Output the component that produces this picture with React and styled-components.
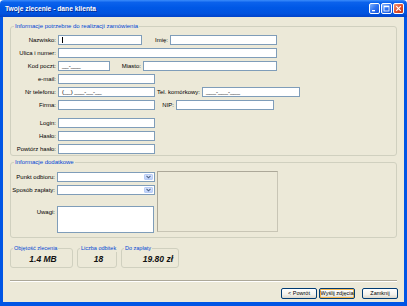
import React from "react";
import styled, { createGlobalStyle } from "styled-components";

const GlobalStyle = createGlobalStyle`
  html, body {
    margin: 0;
    padding: 0;
  }
  body {
    width: 407px;
    height: 306px;
    overflow: hidden;
    font-family: "Liberation Sans", Arial, sans-serif;
  }
`;

const Window = styled.div`
  width: 407px;
  height: 306px;
  display: flex;
  flex-direction: column;
  box-sizing: border-box;
`;

const TitleBar = styled.div`
  height: 17px;
  flex: none;
  display: flex;
  align-items: center;
  padding: 0 3px 0 5px;
  border-radius: 4px 4px 0 0;
  background: linear-gradient(
    #3b8cfb 0%,
    #0b62ec 14%,
    #0058e6 45%,
    #0153de 80%,
    #0143c9 100%
  );
`;

const Title = styled.div`
  flex: 1;
  color: #fff;
  font-size: 6.7px;
  font-weight: bold;
  text-shadow: 1px 1px 0 #0a2a8c;
`;

const TitleButtons = styled.div`
  display: flex;
  gap: 1px;
`;

const TitleButton = styled.div`
  width: 11px;
  height: 11px;
  box-sizing: border-box;
  border: 1px solid #fff;
  border-radius: 2px;
  display: flex;
  align-items: center;
  justify-content: center;
  background: ${(p) =>
    p.$close
      ? "linear-gradient(135deg, #f09a7c, #e1512f 50%, #c23a1a)"
      : "linear-gradient(135deg, #7fb1ff, #2f72f0 50%, #1656dd)"};
`;

const Body = styled.div`
  flex: 1;
  display: flex;
  flex-direction: column;
  background: #ece9d8;
  border: 0 solid #0055e5;
  border-width: 0 3px 4px 3px;
  padding: 6px 7px 0 7px;
  font-size: 6px;
  color: #000;
`;

const Group = styled.fieldset`
  margin: ${(p) => p.$m || "0"};
  padding: ${(p) => p.$pad};
  border: 1px solid #d0d0bf;
  border-radius: 3px;
  min-width: 0;
  width: ${(p) => (p.$w ? `${p.$w}px` : "auto")};
  box-sizing: border-box;
`;

const Legend = styled.legend`
  padding: 0 1px;
  margin-left: ${(p) => p.$ml || 3}px;
  color: #0046d5;
  font-size: ${(p) => p.$fs || 6}px;
  line-height: 7px;
  white-space: nowrap;
`;

const Rows = styled.div`
  display: flex;
  flex-direction: column;
  gap: 3px;
`;

const Row = styled.div`
  display: flex;
  align-items: ${(p) => (p.$top ? "flex-start" : "center")};
  margin-top: ${(p) => p.$mt || 0}px;
`;

const Label = styled.div`
  flex: none;
  width: ${(p) => p.$w}px;
  box-sizing: border-box;
  padding-right: 2px;
  padding-top: ${(p) => (p.$top ? 2 : 0)}px;
  text-align: right;
  white-space: nowrap;
  font-size: 6px;
  line-height: 8px;
`;

const Field = styled.div`
  flex: none;
  width: ${(p) => p.$w}px;
  height: ${(p) => p.$h || 10}px;
  box-sizing: border-box;
  border: 1px solid #7f9db9;
  background: #fff;
  font-size: 6px;
  line-height: 8px;
  padding: 0 3px;
  white-space: nowrap;
  overflow: hidden;
`;

const Caret = styled.span`
  display: inline-block;
  width: 1px;
  height: 6px;
  margin-top: 1px;
  background: #000;
  vertical-align: top;
`;

const Combo = styled.div`
  flex: none;
  width: ${(p) => p.$w}px;
  height: 10px;
  box-sizing: border-box;
  border: 1px solid #7f9db9;
  background: #fff;
  display: flex;
  justify-content: flex-end;
  padding: 1px;
`;

const ComboButton = styled.div`
  width: 9px;
  height: 100%;
  box-sizing: border-box;
  border: 1px solid #b9cdf6;
  border-radius: 1px;
  background: linear-gradient(#dbe6fd, #bcd0fa);
  display: flex;
  align-items: center;
  justify-content: center;
`;

const Split = styled.div`
  display: flex;
  align-items: flex-start;
`;

const Panel = styled.div`
  width: 121px;
  height: 61px;
  margin: -1px 0 0 2px;
  box-sizing: border-box;
  border: 1px solid #aca899;
  border-right-color: #c8c5b5;
  border-bottom-color: #c8c5b5;
`;

const InfoRow = styled.div`
  display: flex;
  gap: 4px;
  margin-top: 7px;
`;

const Value = styled.div`
  height: 15px;
  font-size: 8.5px;
  font-weight: bold;
  font-style: italic;
  line-height: 15px;
  color: #111;
  text-align: ${(p) => p.$align || "center"};
  padding: 0 ${(p) => (p.$align === "right" ? 5 : 0)}px 0 ${(p) => (p.$align === "right" ? 0 : 3)}px;
`;

const Separator = styled.div`
  margin-top: 12px;
  border-top: 1px solid #aca899;
  border-bottom: 1px solid #fff;
`;

const ButtonRow = styled.div`
  display: flex;
  justify-content: flex-end;
  gap: 2px;
  margin-top: 6px;
  margin-right: -1px;
`;

const Button = styled.div`
  width: 36px;
  height: 11px;
  box-sizing: border-box;
  margin-left: ${(p) => p.$ml || 0}px;
  border: 1px solid #003c74;
  border-radius: 2px;
  background: linear-gradient(#ffffff, #f3f2ec 60%, #dcd8cc);
  box-shadow: ${(p) => (p.$default ? "inset 0 0 0 1px #f7b851" : "none")};
  font-size: 5.5px;
  line-height: 9px;
  text-align: center;
  white-space: nowrap;
`;

const Chevron = () => (
  <svg width="5" height="4" viewBox="0 0 5 4">
    <path d="M0.5 0.8 L2.5 2.8 L4.5 0.8" fill="none" stroke="#4d6185" strokeWidth="1.1" />
  </svg>
);

export default function App() {
  return (
    <Window>
      <GlobalStyle />
      <TitleBar>
        <Title>Twoje zlecenie - dane klienta</Title>
        <TitleButtons>
          <TitleButton>
            <svg width="7" height="7" viewBox="0 0 7 7">
              <rect x="1" y="5" width="3" height="1.3" fill="#fff" />
            </svg>
          </TitleButton>
          <TitleButton>
            <svg width="7" height="7" viewBox="0 0 7 7">
              <rect x="1" y="1" width="5" height="5" fill="none" stroke="#fff" strokeWidth="0.8" />
              <rect x="1" y="1" width="5" height="1.2" fill="#fff" />
            </svg>
          </TitleButton>
          <TitleButton $close>
            <svg width="7" height="7" viewBox="0 0 7 7">
              <path d="M1.2 1.2 L5.8 5.8 M5.8 1.2 L1.2 5.8" stroke="#fff" strokeWidth="1.2" />
            </svg>
          </TitleButton>
        </TitleButtons>
      </TitleBar>
      <Body>
        <Group $pad="5px 0 1px 0">
          <Legend>Informacje potrzebne do realizacji zamówienia</Legend>
          <Rows>
            <Row>
              <Label $w={47}>Nazwisko:</Label>
              <Field $w={84}>
                <Caret />
              </Field>
              <Label $w={28}>Imię:</Label>
              <Field $w={107} />
            </Row>
            <Row>
              <Label $w={47}>Ulica i numer:</Label>
              <Field $w={219} />
            </Row>
            <Row>
              <Label $w={47}>Kod poczt:</Label>
              <Field $w={52}>__-___</Field>
              <Label $w={33}>Miasto:</Label>
              <Field $w={134} />
            </Row>
            <Row>
              <Label $w={47}>e-mail:</Label>
              <Field $w={97} />
            </Row>
            <Row>
              <Label $w={47}>Nr telefonu:</Label>
              <Field $w={97}>(__) ___-__-__</Field>
              <Label $w={47}>Tel. komórkowy:</Label>
              <Field $w={98}>___-___-___</Field>
            </Row>
            <Row>
              <Label $w={47}>Firma:</Label>
              <Field $w={97} />
              <Label $w={21}>NIP:</Label>
              <Field $w={98} />
            </Row>
            <Row $mt={5}>
              <Label $w={47}>Login:</Label>
              <Field $w={97} />
            </Row>
            <Row>
              <Label $w={47}>Hasło:</Label>
              <Field $w={97} />
            </Row>
            <Row>
              <Label $w={47}>Powtórz hasło:</Label>
              <Field $w={97} />
            </Row>
          </Rows>
        </Group>

        <Group $m="3px 0 0 0" $pad="6px 0 4px 0">
          <Legend>Informacje dodatkowe</Legend>
          <Split>
            <Rows>
              <Row>
                <Label $w={46}>Punkt odbioru:</Label>
                <Combo $w={98}>
                  <ComboButton>
                    <Chevron />
                  </ComboButton>
                </Combo>
              </Row>
              <Row>
                <Label $w={46}>Sposób zapłaty:</Label>
                <Combo $w={98}>
                  <ComboButton>
                    <Chevron />
                  </ComboButton>
                </Combo>
              </Row>
              <Row $mt={8} $top>
                <Label $w={46} $top>
                  Uwagi:
                </Label>
                <Field $w={97} $h={27} />
              </Row>
            </Rows>
            <Panel />
          </Split>
        </Group>

        <InfoRow>
          <Group $w={63} $pad="0">
            <Legend $fs={5.5} $ml={2}>
              Objętość zlecenia
            </Legend>
            <Value>1.4 MB</Value>
          </Group>
          <Group $w={40} $pad="0">
            <Legend $fs={5.5} $ml={2}>
              Liczba odbitek
            </Legend>
            <Value>18</Value>
          </Group>
          <Group $w={58} $pad="0">
            <Legend $fs={5.5} $ml={2}>
              Do zapłaty
            </Legend>
            <Value $align="right">19.80 zł</Value>
          </Group>
        </InfoRow>

        <Separator />

        <ButtonRow>
          <Button>&lt; Powrót</Button>
          <Button $default>Wyślij zdjęcia</Button>
          <Button $ml={5}>Zamknij</Button>
        </ButtonRow>
      </Body>
    </Window>
  );
}
